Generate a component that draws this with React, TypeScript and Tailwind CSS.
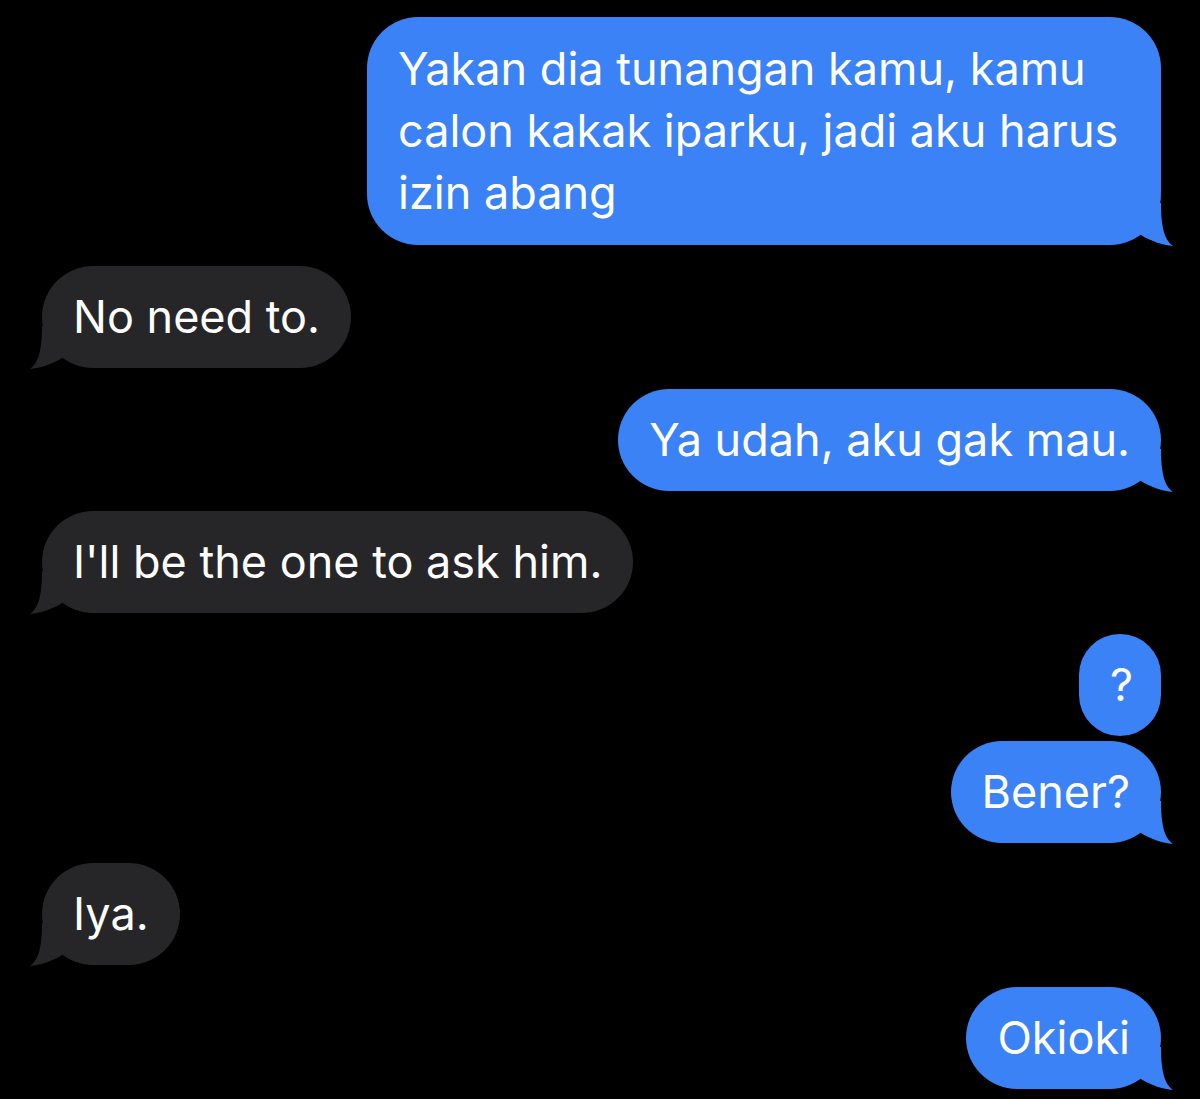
import type { ReactNode } from 'react';

type Side = 'in' | 'out';

const blue = '#3b82f6';
const gray = '#262628';

// little hook at the bottom corner of the last bubble in a group
function Tail({ side }: { side: Side }) {
  const fill = side === 'out' ? blue : gray;
  const pos =
    side === 'out'
      ? 'right-[-15px] bottom-[-2px]'
      : 'left-[-15px] bottom-[-2px] -scale-x-100';
  return (
    <svg
      className={`pointer-events-none absolute ${pos}`}
      width="40"
      height="52"
      viewBox="0 0 40 52"
    >
      <path
        d="M5 40 C14 46 27 50 37 51 C30 46 25 36 25 8 L0 8 L0 40 Z"
        fill={fill}
      />
    </svg>
  );
}

function Bubble({
  side,
  tail = true,
  className = '',
  children,
}: {
  side: Side;
  tail?: boolean;
  className?: string;
  children: ReactNode;
}) {
  const bg = side === 'out' ? 'bg-[#3b82f6]' : 'bg-[#262628]';
  return (
    <div className={`flex ${side === 'out' ? 'justify-end' : 'justify-start'} ${className}`}>
      <div
        className={`relative rounded-[51px] ${bg} px-[31px] py-[20px] text-[45px] leading-[62px] text-white`}
      >
        {children}
        {tail && <Tail side={side} />}
      </div>
    </div>
  );
}

export default function App() {
  return (
    <div
      className="min-h-[1099px] w-[1200px] bg-black pl-[42px] pr-[39px] pt-[17px]"
      style={{ fontFamily: 'Inter, "Noto Sans", sans-serif' }}
    >
      <Bubble side="out" className="[&>div]:w-[794px] [&>div]:py-[21px]">
        Yakan dia tunangan kamu, kamu
        <br />
        calon kakak iparku, jadi aku harus
        <br />
        izin abang
      </Bubble>
      <Bubble side="in" className="mt-[21px]">
        No need to.
      </Bubble>
      <Bubble side="out" className="mt-[21px]">
        Ya udah, aku gak mau.
      </Bubble>
      <Bubble side="in" className="mt-[20px]">
        I'll be the one to ask him.
      </Bubble>
      <Bubble side="out" tail={false} className="mt-[21px]">
        <span className="block w-[20px] text-center">?</span>
      </Bubble>
      <Bubble side="out" className="mt-[5px]">
        Bener?
      </Bubble>
      <Bubble side="in" className="mt-[20px]">
        Iya.
      </Bubble>
      <Bubble side="out" className="mt-[22px]">
        Okioki
      </Bubble>
    </div>
  );
}
